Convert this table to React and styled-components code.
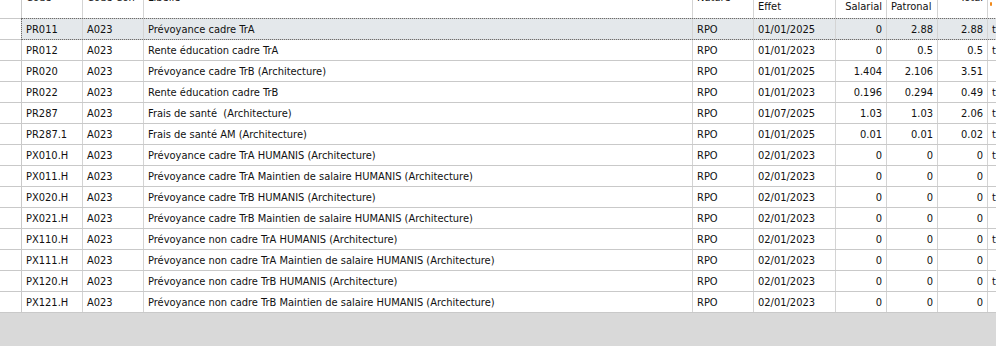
import React from 'react';
import styled, { createGlobalStyle } from 'styled-components';

const GlobalStyle = createGlobalStyle`
  html, body {
    margin: 0;
    padding: 0;
    background: #d9d9d9;
  }
  body {
    font-family: "DejaVu Sans Condensed", "DejaVu Sans", Tahoma, sans-serif;
    font-size: 11px;
    color: #111111;
  }
`;

const columns = [
  { key: 'code', width: 61, label: 'Code', line: 1 },
  { key: 'conv', width: 61, label: 'Code Con', line: 1 },
  { key: 'lib', width: 549, label: 'Libellé', line: 1 },
  { key: 'nat', width: 61, label: 'Nature', line: 1 },
  { key: 'eff', width: 82, label: 'Effet', line: 2 },
  { key: 'sal', width: 51, label: 'Salarial', line: 2, num: true },
  { key: 'pat', width: 51, label: 'Patronal', line: 2 },
  { key: 'tot', width: 50, label: 'Total', line: 1, num: true },
  { key: 'ext', width: 80, label: '', line: 1 },
];

const numeric = ['sal', 'pat', 'tot'];

const rows = [
  ['PR011', 'A023', 'Prévoyance cadre TrA', 'RPO', '01/01/2025', '0', '2.88', '2.88', 't'],
  ['PR012', 'A023', 'Rente éducation cadre TrA', 'RPO', '01/01/2023', '0', '0.5', '0.5', 't'],
  ['PR020', 'A023', 'Prévoyance cadre TrB (Architecture)', 'RPO', '01/01/2025', '1.404', '2.106', '3.51', ''],
  ['PR022', 'A023', 'Rente éducation cadre TrB', 'RPO', '01/01/2023', '0.196', '0.294', '0.49', 't'],
  ['PR287', 'A023', 'Frais de santé\u00a0 (Architecture)', 'RPO', '01/07/2025', '1.03', '1.03', '2.06', 't'],
  ['PR287.1', 'A023', 'Frais de santé AM (Architecture)', 'RPO', '01/01/2025', '0.01', '0.01', '0.02', 't'],
  ['PX010.H', 'A023', 'Prévoyance cadre TrA HUMANIS (Architecture)', 'RPO', '02/01/2023', '0', '0', '0', 't'],
  ['PX011.H', 'A023', 'Prévoyance cadre TrA Maintien de salaire HUMANIS (Architecture)', 'RPO', '02/01/2023', '0', '0', '0', ''],
  ['PX020.H', 'A023', 'Prévoyance cadre TrB HUMANIS (Architecture)', 'RPO', '02/01/2023', '0', '0', '0', 't'],
  ['PX021.H', 'A023', 'Prévoyance cadre TrB Maintien de salaire HUMANIS (Architecture)', 'RPO', '02/01/2023', '0', '0', '0', ''],
  ['PX110.H', 'A023', 'Prévoyance non cadre TrA HUMANIS (Architecture)', 'RPO', '02/01/2023', '0', '0', '0', 't'],
  ['PX111.H', 'A023', 'Prévoyance non cadre TrA Maintien de salaire HUMANIS (Architecture)', 'RPO', '02/01/2023', '0', '0', '0', ''],
  ['PX120.H', 'A023', 'Prévoyance non cadre TrB HUMANIS (Architecture)', 'RPO', '02/01/2023', '0', '0', '0', 't'],
  ['PX121.H', 'A023', 'Prévoyance non cadre TrB Maintien de salaire HUMANIS (Architecture)', 'RPO', '02/01/2023', '0', '0', '0', ''],
];

const Screen = styled.div`
  width: 996px;
  height: 346px;
  overflow: hidden;
  background: #d9d9d9;
`;

const Grid = styled.div`
  width: 1100px;
  background: #ffffff;
`;

const HeaderRow = styled.div`
  display: flex;
  height: 18px;
  border-bottom: 1px solid #c9c9c9;
  overflow: hidden;
`;

const HeaderCell = styled.div`
  flex: 0 0 ${p => p.w}px;
  box-sizing: border-box;
  border-right: 1px solid #d4d4d4;
  padding: 0 4px;
  display: flex;
  justify-content: ${p => (p.num ? 'flex-end' : 'flex-start')};
  align-items: flex-start;
  overflow: hidden;
`;

const HeaderLabel = styled.span`
  display: block;
  line-height: 13px;
  margin-top: ${p => (p.line === 1 ? -9 : 0)}px;
  white-space: nowrap;
`;

const SortMark = styled.span`
  display: block;
  width: 2px;
  height: 4px;
  margin-top: 2px;
  margin-left: -2px;
  background: #f08a1c;
  border-radius: 1px;
`;

const Row = styled.div`
  display: flex;
  height: 20px;
  border-bottom: 1px solid #c9c9c9;
`;

const RowHead = styled.div`
  flex: 0 0 22px;
  box-sizing: border-box;
  border-right: 1px solid #c9c9c9;
  background: #ffffff;
`;

const RowBody = styled.div`
  display: flex;
  flex: 1;
  background: ${p => (p.selected ? '#e4e8eb' : '#ffffff')};
  outline: ${p => (p.selected ? '1px dotted #6d6d6d' : 'none')};
  outline-offset: 0;
  position: relative;
`;

const Cell = styled.div`
  flex: 0 0 ${p => p.w}px;
  box-sizing: border-box;
  border-right: 1px solid #d4d4d4;
  padding: 0 4px;
  display: flex;
  align-items: center;
  justify-content: ${p => (p.num ? 'flex-end' : 'flex-start')};
  white-space: nowrap;
  overflow: hidden;
  line-height: 13px;
`;

export default function App() {
  return (
    <>
      <GlobalStyle />
      <Screen>
        <Grid>
          <HeaderRow>
            <RowHead />
            {columns.map(c => (
              <HeaderCell key={c.key} w={c.width} num={c.num}>
                {c.key === 'ext' ? <SortMark /> : <HeaderLabel line={c.line}>{c.label}</HeaderLabel>}
              </HeaderCell>
            ))}
          </HeaderRow>
          {rows.map((r, i) => (
            <Row key={r[0]}>
              <RowHead />
              <RowBody selected={i === 0}>
                {columns.map((c, j) => (
                  <Cell key={c.key} w={c.width} num={numeric.includes(c.key)}>
                    {r[j]}
                  </Cell>
                ))}
              </RowBody>
            </Row>
          ))}
        </Grid>
      </Screen>
    </>
  );
}
